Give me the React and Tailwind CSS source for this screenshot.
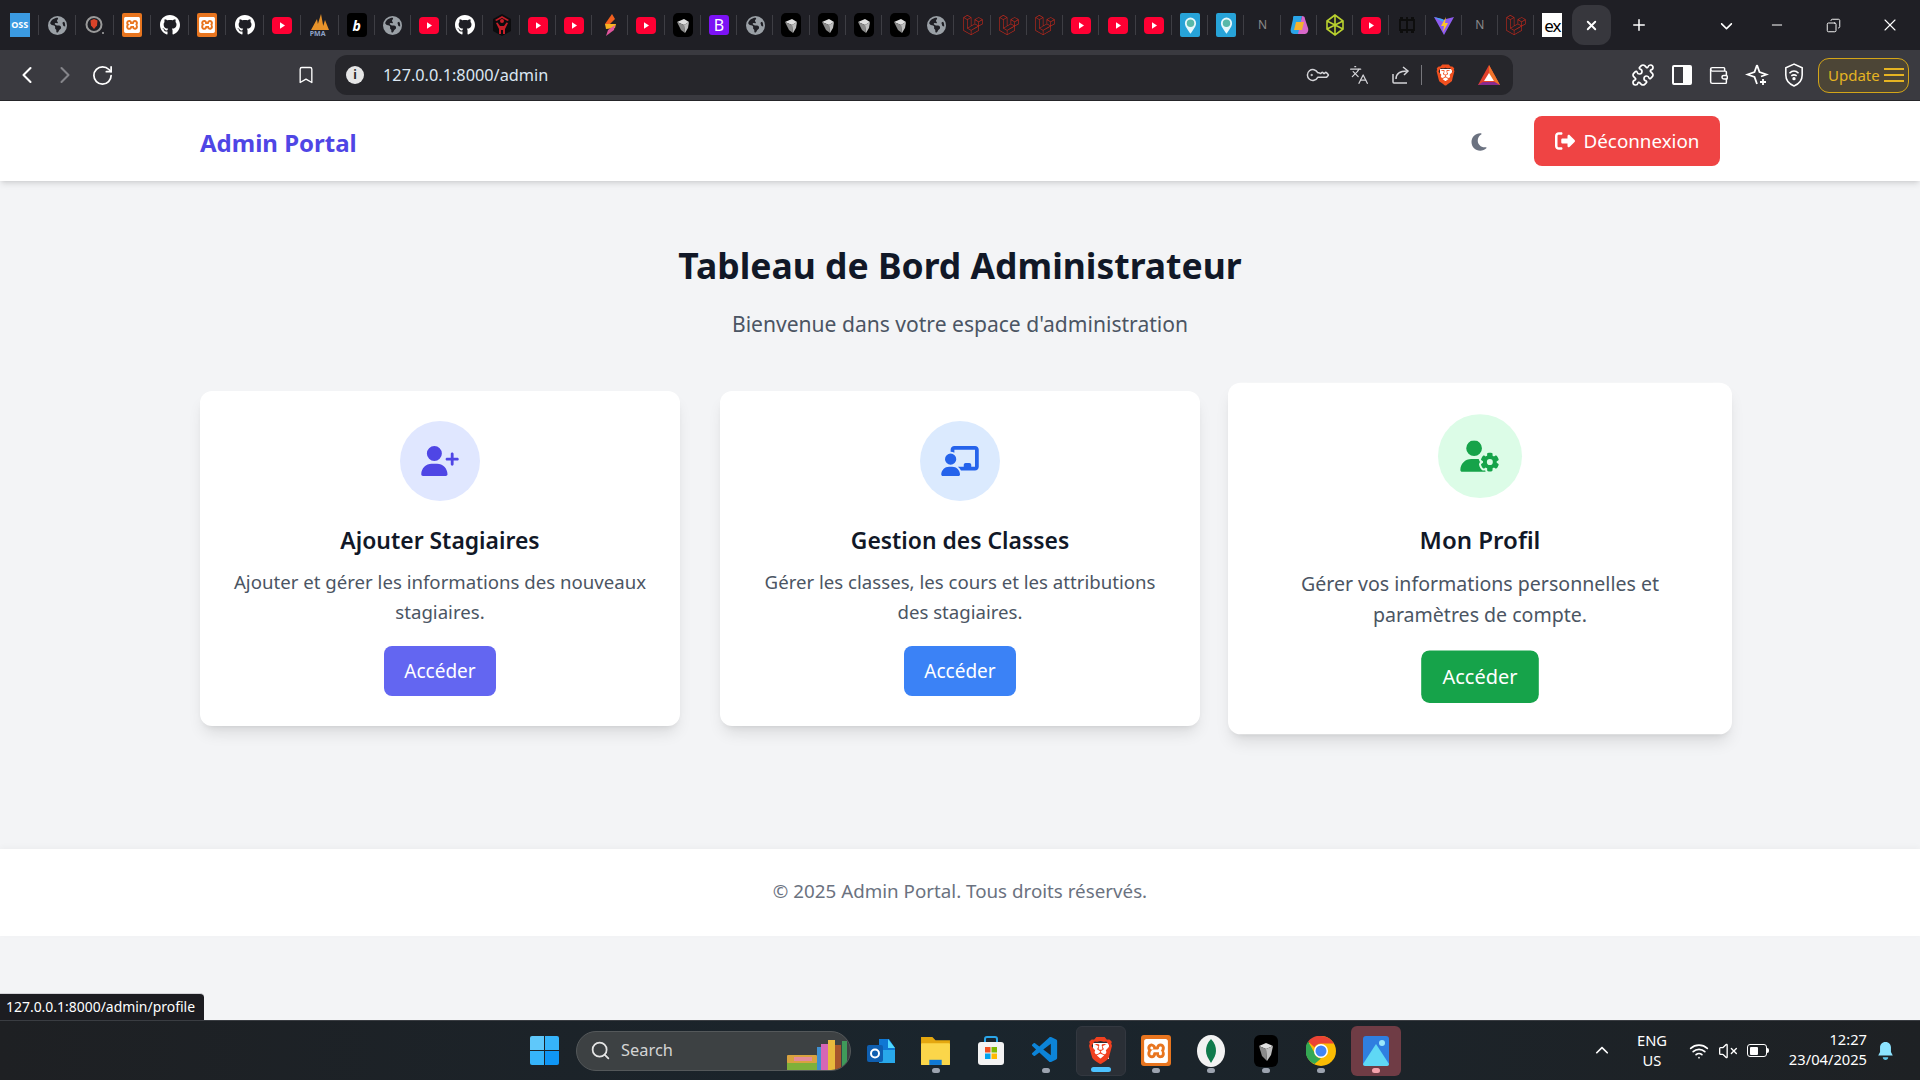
import React from "react";
import { FaUserPlus, FaChalkboardUser, FaUserGear, FaRightFromBracket, FaMoon, FaEarthAmericas, FaGithub, FaChevronDown, FaChevronUp } from "react-icons/fa6";
import { SiXampp, SiLaravel, SiBrave } from "react-icons/si";
import { VscVscode } from "react-icons/vsc";
import { LuChevronLeft, LuChevronRight, LuRotateCw, LuBookmark, LuKeyRound, LuLanguages, LuPuzzle, LuWallet, LuSearch, LuPlus, LuMinus, LuX, LuCopy, LuWifi, LuVolumeX } from "react-icons/lu";

const FONT = "font-['Noto_Sans','Open_Sans',sans-serif]";

const Yt = () => (
  <svg viewBox="0 0 20 17" className="w-5 h-[17px]"><rect width="20" height="17" rx="4" fill="#ff0033" /><path d="M8 5.200v6.600l5-3.300z" fill="#fff" /></svg>
);
const Globe = () => <FaEarthAmericas className="w-[19px] h-[19px] text-[#9aa0a6]" />;
const Cube = () => (
  <svg viewBox="0 0 20 24" className="w-5 h-6">
    <rect width="20" height="24" rx="5" fill="#000" />
    <path d="M4 9l7-3 5 3-5 3z" fill="#e0e0e0" />
    <path d="M4 9l7 3 1 8-4-3z" fill="#8a8a8a" />
    <path d="M16 9l-5 3 1 8 3-5z" fill="#bdbdbd" />
  </svg>
);
const Xampp = () => (
  <div className="w-5 h-6 rounded-[2px] bg-[#e8751f] flex items-center justify-center"><SiXampp className="w-4 h-4 text-white" /></div>
);
const Lar = () => <SiLaravel className="w-5 h-6 text-[#c0281c]" />;
const Gh = () => <FaGithub className="w-5 h-6 text-white" />;
const Pin = () => (
  <div className="w-5 h-6 rounded-[2px] bg-[#27a3d8] flex items-center justify-center">
    <svg viewBox="0 0 14 18" className="w-[13px] h-[17px]"><path d="M7 18C3 12 1 9.500 1 6.500a6 6 0 0 1 12 0C13 9.500 11 12 7 18z" fill="#e6f7fb" /><circle cx="7" cy="6.500" r="4" fill="#58b8a8" /></svg>
  </div>
);
const N = () => <span className="text-[12px] leading-none text-[#8a8a8a]">N</span>;

const tabs = [
  <div className="w-5 h-6 bg-[#3b9ae1] flex items-center justify-center text-[9px] font-bold text-white">OSS</div>,
  <Globe />,
  <svg viewBox="0 0 20 20" className="w-5 h-5"><circle cx="9" cy="9.500" r="7.500" fill="none" stroke="#9a9a9a" strokeWidth="2" /><path d="M9 4l3.500 1.500-.5 5L9 14l-3-3.500-.5-5z" fill="#d9432a" /><circle cx="18" cy="18" r="1" fill="#aaa" /></svg>,
  <Xampp />, <Gh />, <Xampp />, <Gh />, <Yt />,
  <div className="relative w-5 h-6 overflow-hidden">
    <svg viewBox="0 0 20 24" className="w-5 h-6"><path d="M1 17L7 6l2 11zM6 17L11 1l3 16zM12 17l3-10 4 10z" fill="#e8932a" /></svg>
    <span className="absolute left-0 bottom-0 text-[7px] leading-none font-bold text-[#8ea2c8]">PMA</span>
  </div>,
  <div className="w-5 h-6 rounded-[4px] bg-black flex items-center justify-center text-[14px] italic font-bold text-white">b</div>,
  <Globe />, <Yt />, <Gh />,
  <svg viewBox="0 0 20 22" className="w-5 h-[22px]"><path d="M10 0l9 5v12l-9 5-9-5V5z" fill="#0c0c0e" /><path d="M10 2l7 4-1.500 1L10 4 4.500 7 3 6z" fill="#c41e28" /><circle cx="10" cy="7" r="2" fill="#c41e28" /><path d="M4 9l1.500-.5L8 12h4l2.500-3.500L16 9l-3 6v5h-2v-4H9v4H7v-5z" fill="#c41e28" /></svg>,
  <Yt />, <Yt />,
  <svg viewBox="0 0 14 24" className="w-[14px] h-6"><path d="M9 1L2 11l3 2 7-7z" fill="#f2601f" /><path d="M2 11h11l-1 4-9 1z" fill="#f7b322" /><path d="M12 12l-7 5-2 6 8-6z" fill="#e0559c" /></svg>,
  <Yt />, <Cube />,
  <div className="w-5 h-5 rounded-[3px] bg-[#7c12f5] flex items-center justify-center text-[16px] leading-none text-white">B</div>,
  <Globe />, <Cube />, <Cube />, <Cube />, <Cube />, <Globe />, <Lar />, <Lar />, <Lar />, <Yt />, <Yt />, <Yt />, <Pin />, <Pin />, <N />,
  <svg viewBox="0 0 20 24" className="w-5 h-6"><path d="M5 3h8l-3 18H5c-3 0-4-3-3-6l2-9c0-2 0-3 1-3z" fill="#2aa5e8" /><path d="M13 3c2 0 3 1 3 3l3 9c1 3-1 6-3 6H9z" fill="#d867c9" /><path d="M7 9h8l-2 8H5z" fill="#f5b32e" /></svg>,
  <svg viewBox="0 0 20 24" className="w-5 h-6"><path d="M10 2L2 8v8l8 6 8-6V8zM10 2v20M2 8l16 8M18 8L2 16" fill="none" stroke="#b9d12f" strokeWidth="1.600" /></svg>,
  <Yt />,
  <svg viewBox="0 0 20 20" className="w-5 h-5"><path d="M3 5h14v10H3zM10 2v16M6 3H3M17 3h-3M6 17H3M17 17h-3" fill="none" stroke="#0d0d0d" strokeWidth="1.800" /></svg>,
  <svg viewBox="0 0 20 20" className="w-5 h-5"><path d="M0 2l8 2 2 1 2-1 8-2-10 18z" fill="#8e5cf0" /><path d="M0 2l8 2 2 1-1 2z" fill="#3fa9f5" /><path d="M12 2L7 11h3l-1 6 5-9h-3z" fill="#fcc72b" /></svg>,
  <N />, <Lar />,
  <div className="w-5 h-6 bg-white flex items-center justify-center text-[17px] leading-none text-black tracking-[-1px]">ex</div>,
];

const Tab = ({ children, last, first }) => (
  <div className={`relative h-full flex items-center justify-center shrink-0 ${first ? "w-[37.5px]" : "w-[36.24px]"}`}>
    {children}
    {!last && <span className="absolute right-0 top-[15px] w-px h-5 bg-[#3e3e44]" />}
  </div>
);

const TabStrip = () => (
  <div className="h-[50px] bg-[#1f1f25] flex items-center pl-[1px] shrink-0">
    {tabs.map((t, i) => <Tab key={i} first={i < 9} last={i === tabs.length - 1}>{t}</Tab>)}
    <div className="ml-[2px] w-[39px] h-[40px] rounded-xl bg-[#37373d] flex items-center justify-center">
      <LuX className="w-[15px] h-[15px] text-white" strokeWidth={3} />
    </div>
    <LuPlus className="ml-[19px] w-[18px] h-[18px] text-white" strokeWidth={2} />
    <FaChevronDown className="ml-[72px] w-[13px] h-[13px] text-white" />
    <LuMinus className="ml-[36px] w-[16px] h-[16px] text-white" strokeWidth={1.500} />
    <LuCopy className="ml-[41px] w-[15px] h-[15px] text-white -scale-x-100" strokeWidth={1.500} />
    <LuX className="ml-[39px] w-[20px] h-[20px] text-white" strokeWidth={1.300} />
  </div>
);

const Toolbar = () => (
  <div className="h-[51px] bg-[#3a3a40] border-b border-[#26262a] flex items-center shrink-0">
    <LuChevronLeft className="ml-[13px] w-7 h-7 text-white" strokeWidth={1.800} />
    <LuChevronRight className="ml-[10px] w-7 h-7 text-[#85858a]" strokeWidth={1.800} />
    <LuRotateCw className="ml-[12px] w-[23px] h-[23px] text-white" strokeWidth={1.800} />
    <LuBookmark className="ml-[182px] w-[20px] h-[22px] text-white" strokeWidth={1.600} />
    <div className="ml-[19px] w-[1178px] h-10 rounded-xl bg-[#26262b] flex items-center pl-[11px]">
      <div className="w-[18px] h-[18px] rounded-full bg-[#e6e6e6] flex items-center justify-center text-[12px] font-bold leading-none text-[#26262b]">i</div>
      <span className="ml-[19px] text-[16.300px] text-[#dbe6f2]">127.0.0.1:8000/admin</span>
      <LuKeyRound className="ml-auto w-[20px] h-[20px] text-[#d4d4d8] -rotate-[135deg]" strokeWidth={1.800} />
      <LuLanguages className="ml-[22px] w-[20px] h-[20px] text-[#d4d4d8]" strokeWidth={1.500} />
      <svg viewBox="0 0 20 20" fill="none" stroke="#d4d4d8" strokeWidth="1.500" className="ml-[22px] w-[20px] h-[20px]"><path d="M2 9v8a1 1 0 0 0 1 1h13" /><path d="M5 14c0-5 4-8 11-8" /><path d="M12 2l5 4-4 4" /></svg>
      <span className="ml-[10px] w-px h-5 bg-[#77777c]" />
      <div className="relative ml-[13px] w-[21px] h-6 flex items-center justify-center">
        <span className="absolute w-3 h-3 bg-white" />
        <SiBrave className="relative w-[21px] h-6 text-[#f1501f]" />
      </div>
      <svg viewBox="0 0 24 24" className="ml-[21px] mr-[12px] w-6 h-6"><path d="M12 2L1 22h22z" fill="#e2412c" /><path d="M1 22l5-3h12l5 3z" fill="#8a2a8f" /><path d="M12 2v9l6 8 5 3z" fill="#f0742a" /><path d="M12 10l5 8H7z" fill="#fff" /></svg>
    </div>
    <LuPuzzle className="ml-[118px] w-[24px] h-[24px] text-white" strokeWidth={1.700} />
    <div className="ml-[17px] w-[20px] h-[20px] rounded-[2px] border-2 border-white flex justify-end"><span className="w-[7px] bg-white" /></div>
    <LuWallet className="ml-[16px] w-[21px] h-[21px] text-white" strokeWidth={1.700} />
    <svg viewBox="0 0 24 24" fill="none" stroke="#fff" strokeWidth="1.800" className="ml-[16px] w-[24px] h-[24px]"><path d="M12 2l2.500 7 7 2.500-5.500 2M12 2L9.500 9l-7 2.500 7 2.500L12 21" /><path d="M18 16v6M15 19h6" /></svg>
    <svg viewBox="0 0 22 26" fill="none" stroke="#fff" strokeWidth="1.700" className="ml-[15px] w-[20px] h-[24px]"><path d="M11 1L2 5v8c0 6 4 10 9 12 5-2 9-6 9-12V5z" /><path d="M6 11c3-3 7-3 10 0M8 14c2-1.500 4-1.500 6 0" /><circle cx="11" cy="17" r="1" fill="#fff" /></svg>
    <div className="ml-[14px] w-[91px] h-[35px] rounded-[11px] bg-[#4c4536] border border-[#d3a518] flex items-center pl-[9px] text-[15px] text-[#e6b422]">
      Update
      <div className="ml-[4px] w-[20px] flex flex-col gap-[4px]">
        <span className="h-[2px] bg-[#e6b422]" /><span className="h-[2px] bg-[#e6b422]" /><span className="h-[2px] bg-[#e6b422]" />
      </div>
    </div>
  </div>
);

const Card = ({ icon, circle, iconColor, title, lines, btn, featured }) => (
  <div className={`bg-white rounded-xl shadow-lg pt-[30px] pb-[30px] flex flex-col items-center text-center ${featured ? "scale-105" : ""}`}>
    <div className={`w-20 h-20 rounded-full flex items-center justify-center ${circle} ${iconColor}`}>{icon}</div>
    <h3 className="mt-[20px] mb-[-1px] text-[22.900px] leading-10 font-semibold text-[#111827]">{title}</h3>
    <p className="mt-[7px] text-[18.640px] leading-[30px] text-[#4b5563]">{lines[0]}<br />{lines[1]}</p>
    <button className={`mt-[19px] w-28 h-[50px] rounded-lg text-white text-[19px] ${btn}`}>Accéder</button>
  </div>
);

const Page = () => (
  <div className="relative flex-1 min-h-0 bg-[#f3f4f6] flex flex-col">
    <nav className="h-20 bg-white shadow-md shrink-0 px-[200px] flex items-center relative">
      <span className="text-[24px] font-bold text-[#4f46e5] translate-y-[2px]">Admin Portal</span>
      <FaMoon className="ml-auto w-[20px] h-[20px] text-[#6b7280] translate-y-px" />
      <button className="ml-[45px] w-[186px] h-[50px] rounded-lg bg-[#ef4444] text-white text-[18.800px] flex items-center justify-center gap-[9px]">
        <FaRightFromBracket className="w-[20px] h-[20px]" /> Déconnexion
      </button>
    </nav>
    <main className="px-[200px] pt-[59px] shrink-0">
      <h1 className="text-center text-[35.500px] leading-[50px] font-bold text-[#111827]">Tableau de Bord Administrateur</h1>
      <p className="mt-[19px] text-center text-[21.070px] leading-[30px] text-[#4b5563]">Bienvenue dans votre espace d'administration</p>
      <div className="mt-[52px] grid grid-cols-3 gap-10">
        <Card title="Ajouter Stagiaires" lines={["Ajouter et gérer les informations des nouveaux", "stagiaires."]} circle="bg-[#e0e7ff]" iconColor="text-[#4f46e5]" btn="bg-[#6366f1]" icon={<FaUserPlus className="w-[38px] h-[30px]" />} />
        <Card title="Gestion des Classes" lines={["Gérer les classes, les cours et les attributions", "des stagiaires."]} circle="bg-[#dbeafe]" iconColor="text-[#2563eb]" btn="bg-[#3b82f6]" icon={<FaChalkboardUser className="w-[38px] h-[30px]" />} />
        <Card featured title="Mon Profil" lines={["Gérer vos informations personnelles et", "paramètres de compte."]} circle="bg-[#dcfce7]" iconColor="text-[#16a34a]" btn="bg-[#16a34a]" icon={<FaUserGear className="w-[38px] h-[30px]" />} />
      </div>
    </main>
    <footer className="mt-[123px] h-[87px] bg-white shadow-[0_-2px_6px_rgba(0,0,0,0.03)] shrink-0 flex items-center justify-center text-[18.770px] text-[#6b7280]">
      <span className="-translate-y-px">© 2025 Admin Portal. Tous droits réservés.</span>
    </footer>
    <div className="absolute left-0 bottom-0 w-[204px] h-[27px] rounded-tr-[4px] bg-[#1c1c21] border-t border-[#d4d4d8] pl-[6px] flex items-center text-[13.950px] text-white">
      127.0.0.1:8000/admin/profile
    </div>
  </div>
);

const Dot = ({ c = "bg-[#9ca3af]", w = "w-[8px]" }) => <span className={`absolute bottom-[3px] left-1/2 -translate-x-1/2 h-[5px] rounded-full ${w} ${c}`} />;

const TaskItem = ({ children, dot, active, photos }) => (
  <div className={`relative w-[50px] h-[50px] mx-[2.500px] rounded-md flex items-center justify-center ${active ? "bg-[#2a2f36] border border-[#333840]" : ""} ${photos ? "bg-[#6f3c45]" : ""}`}>
    {children}
    {dot}
  </div>
);

const Taskbar = () => (
  <div className="h-[60px] shrink-0 border-t border-[#3a3d42] bg-gradient-to-r from-[#1e2023] via-[#1a252d] to-[#1e2124] flex items-center text-white">
    <div className="ml-[530px] w-[29px] h-[29px] grid grid-cols-2 gap-[1.500px]">
      <span className="bg-[#5fc8fa] rounded-tl-[2px]" /><span className="bg-[#36b4fa] rounded-tr-[2px]" /><span className="bg-[#36b4fa] rounded-bl-[2px]" /><span className="bg-[#0f96f5] rounded-br-[2px]" />
    </div>
    <div className="relative ml-[17px] w-[275px] h-10 rounded-full bg-[#3d4143] border border-[#54585a] flex items-center pl-[13px] overflow-hidden">
      <LuSearch className="w-[21px] h-[21px] text-[#e5e5e5] " strokeWidth={2} />
      <span className="ml-[10px] text-[16.400px] text-[#d4d4d4]">Search</span>
      <svg viewBox="0 0 62 30" className="absolute right-[1px] bottom-0 w-[62px] h-[30px]">
        <rect x="0" y="22" width="30" height="8" fill="#7fb03a" /><rect x="0" y="15" width="30" height="8" rx="1" fill="#d9a23f" /><rect x="7" y="17" width="18" height="4" fill="#e48a9a" />
        <rect x="30" y="7" width="4" height="23" fill="#3f8fd0" /><rect x="34" y="4" width="7" height="26" fill="#d566b5" /><rect x="41" y="0" width="7" height="30" fill="#e8b93d" /><rect x="48" y="5" width="6" height="25" fill="#a6552c" /><rect x="55" y="1" width="5" height="28" fill="#3f9a5a" />
      </svg>
    </div>
    <div className="ml-[2px] flex items-center">
      <TaskItem><svg viewBox="0 0 30 30" className="w-[30px] h-[30px]"><path d="M13 3h10l6 9v15H13z" fill="#0f78d4" /><path d="M22 3l7 9h-7z" fill="#50d9ff" /><path d="M13 14h16v13H13z" fill="#28a8ea" /><rect x="1" y="9" width="16" height="17" rx="2" fill="#0f5fb0" /><circle cx="9" cy="17.500" r="4" fill="none" stroke="#fff" strokeWidth="2" /></svg></TaskItem>
      <TaskItem dot={<Dot />}><svg viewBox="0 0 30 30" className="w-[31px] h-[31px]"><path d="M1 2h11l3 3h14v24H1z" fill="#e4a70f" /><rect x="1" y="8" width="28" height="21" rx="1" fill="#fbd64a" /><path d="M9 24h12v5H9z" fill="#0f78d4" /></svg></TaskItem>
      <TaskItem><svg viewBox="0 0 30 30" className="w-[30px] h-[32px]"><path d="M9 7V3a2 2 0 0 1 2-2h8a2 2 0 0 1 2 2v4" fill="none" stroke="#2aa5e8" strokeWidth="2" /><rect x="2" y="6" width="26" height="23" rx="3" fill="#f3f3f3" /><rect x="9" y="11" width="5.500" height="5.500" fill="#f25022" /><rect x="15.500" y="11" width="5.500" height="5.500" fill="#7fba00" /><rect x="9" y="17.500" width="5.500" height="5.500" fill="#00a4ef" /><rect x="15.500" y="17.500" width="5.500" height="5.500" fill="#ffb900" /></svg></TaskItem>
      <TaskItem dot={<Dot />}><VscVscode className="w-[31px] h-[31px] text-[#0c84d8]" /></TaskItem>
      <TaskItem active dot={<Dot c="bg-[#4cc2ff]" w="w-[20px]" />}>
        <div className="relative w-[27px] h-[31px] flex items-center justify-center"><span className="absolute w-4 h-4 bg-white" /><SiBrave className="relative w-[27px] h-[31px] text-[#f1401f]" /></div>
      </TaskItem>
      <TaskItem dot={<Dot />}><div className="w-[30px] h-[31px] rounded-[3px] bg-[#e8751f] flex items-center justify-center"><SiXampp className="w-6 h-6 text-white" /></div></TaskItem>
      <TaskItem dot={<Dot />}><svg viewBox="0 0 28 32" className="w-[28px] h-[32px]"><ellipse cx="14" cy="16" rx="14" ry="16" fill="#f2f2f2" /><path d="M14 4c4 4 5 8 5 12s-2 7-5 12c-3-5-5-8-5-12s1-8 5-12z" fill="#0f7a4c" /></svg></TaskItem>
      <TaskItem dot={<Dot />}><svg viewBox="0 0 24 32" className="w-[24px] h-[32px]"><rect width="24" height="32" rx="6" fill="#000" /><path d="M5 11l7-3 7 3-7 3z" fill="#e0e0e0" /><path d="M5 11l7 3 1 12-5-5z" fill="#8a8a8a" /><path d="M19 11l-7 3 1 12 4-6z" fill="#bdbdbd" /></svg></TaskItem>
      <TaskItem dot={<Dot />}><svg viewBox="0 0 30 30" className="w-[30px] h-[30px]"><circle cx="15" cy="15" r="15" fill="#fbbc04" /><path d="M15 0a15 15 0 0 1 13 7.500H15a7.500 7.500 0 0 0-6.500 3.750L2 5.500A15 15 0 0 1 15 0z" fill="#ea4335" /><path d="M2 5.500l6.500 11.250A7.500 7.500 0 0 0 15 22.500L8.500 28A15 15 0 0 1 2 5.500z" fill="#34a853" /><circle cx="15" cy="15" r="7" fill="#fff" /><circle cx="15" cy="15" r="5.500" fill="#4285f4" /></svg></TaskItem>
      <TaskItem photos dot={<Dot c="bg-[#f4a3ad]" />}><svg viewBox="0 0 26 30" className="w-[26px] h-[30px]"><rect width="26" height="30" rx="3" fill="#2f7fe0" /><path d="M0 28L13 8l13 20a2 2 0 0 1-2 2H2a2 2 0 0 1-2-2z" fill="#5fd8f5" /><circle cx="19" cy="7" r="3" fill="#9be8fa" /></svg></TaskItem>
    </div>
    <FaChevronUp className="ml-[192px] w-[14px] h-[14px] text-white" />
    <div className="ml-[21px] w-[44px] text-center text-[14.700px] leading-[20px] -translate-y-px">ENG<br />US</div>
    <LuWifi className="ml-[15px] w-[20px] h-[20px]" strokeWidth={2} />
    <LuVolumeX className="ml-[9px] w-[20px] h-[20px]" strokeWidth={1.600} />
    <div className="ml-[9px] w-[20px] h-[13px] rounded-[3px] border-[1.500px] border-white p-[1.500px] flex"><span className="w-[8px] bg-white rounded-[1px]" /></div>
    <span className="w-[2px] h-[5px] bg-white rounded-r-sm" />
    <div className="ml-[16px] w-[82px] text-right text-[14.700px] leading-[20px] -translate-y-[2px]">12:27<br />23/04/2025</div>
    <svg viewBox="0 0 18 22" className="ml-[10px] w-[17px] h-[20px]"><path d="M9 1c-4 0-6 3-6 6v5l-2 4h16l-2-4V7c0-3-2-6-6-6z" fill="#8ce3ff" /><path d="M6 18h6c0 2-1.500 3-3 3s-3-1-3-3z" fill="#5fc4e8" /></svg>
  </div>
);

export default function App() {
  return (
    <div className={`w-[1920px] h-[1080px] overflow-hidden flex flex-col ${FONT}`}>
      <TabStrip />
      <Toolbar />
      <Page />
      <Taskbar />
    </div>
  );
}
